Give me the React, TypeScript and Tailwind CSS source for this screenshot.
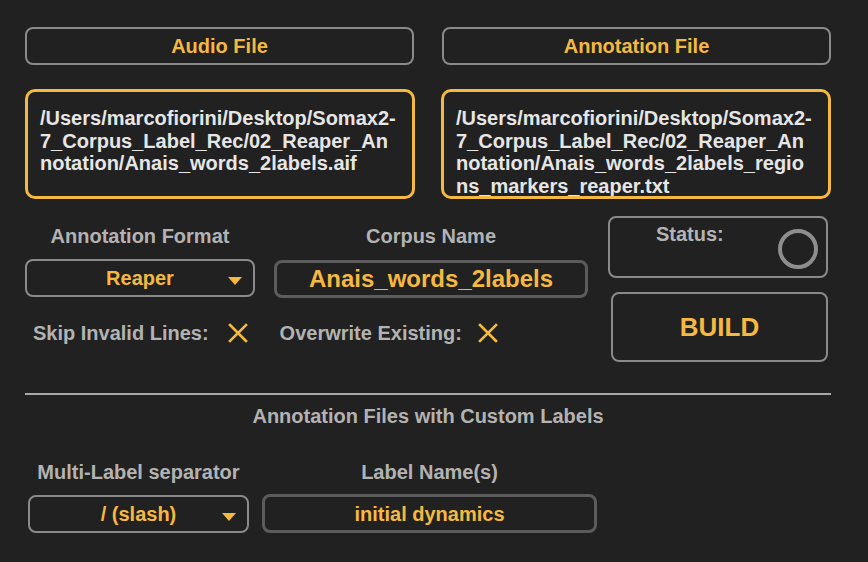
import React from "react";

const ORANGE = "text-[#f5b942]";

const FileButton = ({ label }: { label: string }) => (
  <div className="h-[38px] rounded-[8px] border-2 border-[#8a8a8a] flex items-center justify-center">
    <span className={`text-[20px] leading-[24px] font-bold ${ORANGE}`}>{label}</span>
  </div>
);

const PathBox = ({ lines }: { lines: string[] }) => (
  <div className="h-[110px] rounded-[10px] border-[3px] border-[#f5b942] overflow-hidden px-[12px] pt-[15px]">
    {lines.map((l) => (
      <div key={l} className="text-[20px] leading-[22.6px] font-bold text-[#e6e6e6] whitespace-nowrap">
        {l}
      </div>
    ))}
  </div>
);

const Arrow = () => (
  <svg width="14" height="8" viewBox="0 0 14 8">
    <path d="M0 0 L14 0 L7 8 Z" fill="#f5b942" />
  </svg>
);

const Cross = () => (
  <svg width="20" height="20" viewBox="0 0 20 20">
    <path d="M2 2 L18 18 M18 2 L2 18" stroke="#f5b942" strokeWidth="2.6" strokeLinecap="square" />
  </svg>
);

const Dropdown = ({ value, className }: { value: string; className: string }) => (
  <div className={`h-[38px] rounded-[8px] border-2 border-[#8a8a8a] relative flex items-center justify-center ${className}`}>
    <span className={`text-[20px] leading-[24px] font-bold ${ORANGE}`}>{value}</span>
    <div className="absolute right-[11px] top-[16px] flex">
      <Arrow />
    </div>
  </div>
);

const Label = ({ children, className = "" }: { children: React.ReactNode; className?: string }) => (
  <div className={`text-[20px] font-bold text-[#b3b3b3] leading-[20px] text-center ${className}`}>{children}</div>
);

export default function App() {
  return (
    <div
      className="w-[868px] h-[562px] bg-[#212121] overflow-hidden px-[25px] pt-[27px]"
      style={{ fontFamily: '"Liberation Sans", Arial, sans-serif' }}
    >
      <div className="w-[806px] grid grid-cols-2 gap-x-[28px]">
        <FileButton label="Audio File" />
        <FileButton label="Annotation File" />
      </div>
      <div className="w-[806px] grid grid-cols-2 gap-x-[26px] mt-[24px]">
        <PathBox
          lines={[
            "/Users/marcofiorini/Desktop/Somax2-",
            "7_Corpus_Label_Rec/02_Reaper_An",
            "notation/Anais_words_2labels.aif",
          ]}
        />
        <PathBox
          lines={[
            "/Users/marcofiorini/Desktop/Somax2-",
            "7_Corpus_Label_Rec/02_Reaper_An",
            "notation/Anais_words_2labels_regio",
            "ns_markers_reaper.txt",
          ]}
        />
      </div>

      <div className="flex mt-[17px]">
        <div className="w-[563px]">
          <div className="flex gap-[19px] mt-[10px]">
            <div className="w-[230px]">
              <Label>Annotation Format</Label>
              <Dropdown value="Reaper" className="mt-[13px]" />
            </div>
            <div className="w-[314px]">
              <Label>Corpus Name</Label>
              <div className="mt-[14px] h-[38px] rounded-[8px] border-[3px] border-[#5c5c5c] flex items-center justify-center">
                <span className={`text-[24px] leading-[28px] font-bold ${ORANGE}`}>Anais_words_2labels</span>
              </div>
            </div>
          </div>
          <div className="flex items-center mt-[23px]">
            <span className="ml-[8px] text-[20px] leading-[24px] font-bold text-[#b3b3b3]">Skip Invalid Lines:</span>
            <span className="ml-[19px] flex"><Cross /></span>
            <span className="ml-[32px] text-[20px] leading-[24px] font-bold text-[#b3b3b3]">Overwrite Existing:</span>
            <span className="ml-[16px] flex"><Cross /></span>
          </div>
        </div>
        <div className="ml-[20px] w-[220px]">
          <div className="h-[62px] rounded-[8px] border-2 border-[#8a8a8a] relative">
            <span className="absolute left-[46px] top-[4px] text-[20px] leading-[24px] font-bold text-[#b3b3b3]">Status:</span>
            <div className="absolute right-[8px] top-[11px] w-[40px] h-[40px] rounded-full border-[4px] border-[#8e8e8e]" />
          </div>
          <div className="ml-[3px] mt-[14px] h-[70px] rounded-[8px] border-2 border-[#8a8a8a] flex items-center justify-center">
            <span className={`text-[26px] leading-[30px] font-bold ${ORANGE}`}>BUILD</span>
          </div>
        </div>
      </div>

      <div className="w-[806px] h-[2px] bg-[#a8a8a8] mt-[31px]" />
      <Label className="w-[806px] mt-[11px]">Annotation Files with Custom Labels</Label>

      <div className="flex mt-[36px] ml-[3px]">
        <div className="w-[221px]">
          <Label>Multi-Label separator</Label>
          <Dropdown value="/ (slash)" className="mt-[13px]" />
        </div>
        <div className="ml-[13px] w-[335px]">
          <Label>Label Name(s)</Label>
          <div className="mt-[12px] h-[39px] rounded-[8px] border-[3px] border-[#5c5c5c] flex items-center justify-center">
            <span className={`text-[20px] leading-[24px] font-bold ${ORANGE}`}>initial dynamics</span>
          </div>
        </div>
      </div>
    </div>
  );
}
